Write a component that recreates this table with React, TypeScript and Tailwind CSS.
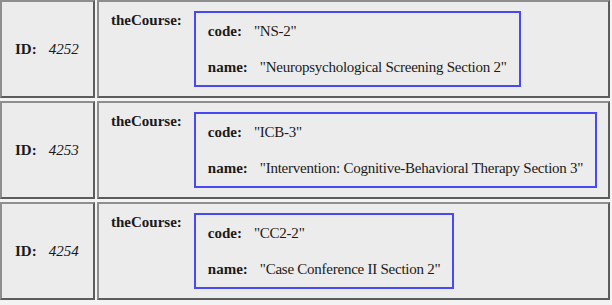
import React from 'react';

type Course = { id: string; code: string; name: string };

const courses: Course[] = [
  { id: '4252', code: 'NS-2', name: 'Neuropsychological Screening Section 2' },
  { id: '4253', code: 'ICB-3', name: 'Intervention: Cognitive-Behavioral Therapy Section 3' },
  { id: '4254', code: 'CC2-2', name: 'Case Conference II Section 2' },
];

const cell =
  'bg-[#ececec] border-2 border-t-[#8e8e8e] border-l-[#8e8e8e] border-b-[#5c5c5c] border-r-[#5c5c5c]';

const App: React.FC = () => {
  return (
    <div className="w-[612px] h-[305px] bg-[#f3f3f3] flex flex-col gap-[3px] text-[15px] leading-[18px] text-[#1a1a1a] font-['Liberation_Serif','Times_New_Roman',serif] overflow-hidden">
      {courses.map((c) => (
        <div key={c.id} className="flex gap-[2px] h-[98px] pr-[2px]">
          {/* ID column */}
          <div className={`${cell} w-[95px] flex items-center pl-[13px]`}>
            <span className="font-bold">ID:</span>
            <span className="italic ml-3">{c.id}</span>
          </div>

          {/* course column */}
          <div className={`${cell} flex-1 flex items-start gap-3 pl-3 pt-[9px]`}>
            <span className="font-bold whitespace-nowrap">theCourse:</span>
            <div className="border-2 border-[#4848f8] px-3 py-[9px] flex flex-col gap-[18px] whitespace-nowrap">
              <div>
                <span className="font-bold">code:</span>
                <span className="ml-3 tracking-[-0.25px]">"{c.code}"</span>
              </div>
              <div>
                <span className="font-bold">name:</span>
                <span className="ml-3 tracking-[-0.25px]">"{c.name}"</span>
              </div>
            </div>
          </div>
        </div>
      ))}
    </div>
  );
};

export default App;
